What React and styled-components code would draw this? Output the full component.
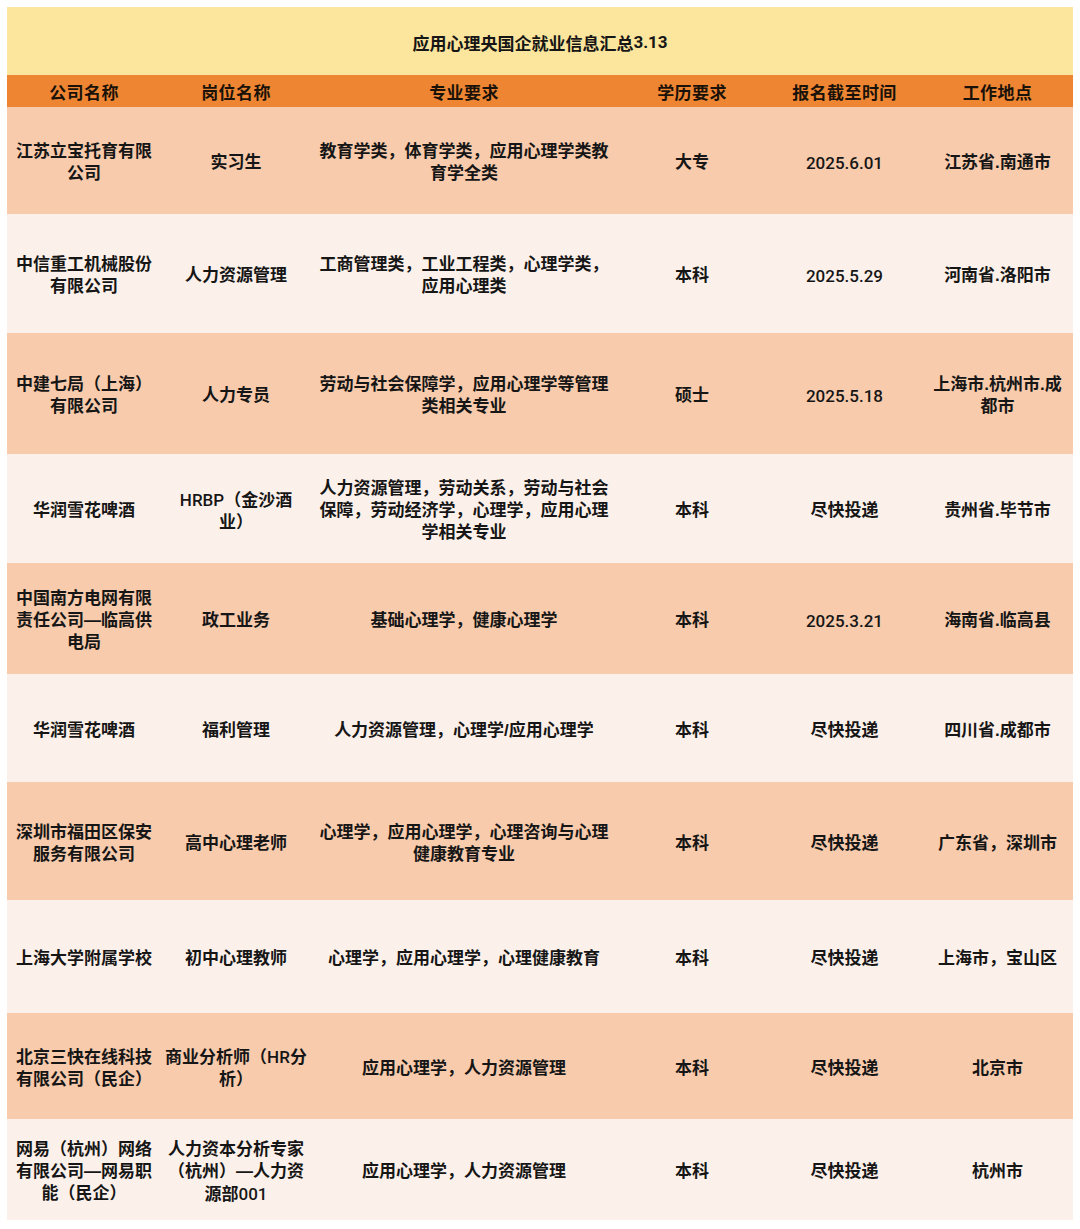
import React from 'react'
import styled, { createGlobalStyle } from 'styled-components'

const GlobalStyle = createGlobalStyle`
  body {
    margin: 0;
    background: #ffffff;
    font-family: "Liberation Sans", "Noto Sans CJK SC", sans-serif;
    color: #161616;
  }
`

const Page = styled.div`
  padding: 7px;
`

const Table = styled.div`
  width: 1066px;
  display: flex;
  flex-direction: column;
`

const TitleBar = styled.div`
  height: 68px;
  padding-top: 2px;
  box-sizing: border-box;
  background: #fce59c;
  display: flex;
  align-items: center;
  justify-content: center;
  font-size: 17px;
  font-weight: 700;
`

const Row = styled.div`
  display: grid;
  grid-template-columns: 154px 150px 306px 150px 155px 151px;
  height: ${(p) => p.$h}px;
  background: ${(p) => p.$bg};
`

const HeadRow = styled(Row)`
  background: #ee8533;
`

const HeadCell = styled.div`
  display: flex;
  align-items: center;
  justify-content: center;
  font-size: 17px;
  font-weight: 700;
  letter-spacing: 0.4px;
  color: #1a1208;
`

const Cell = styled.div`
  display: flex;
  align-items: center;
  justify-content: center;
  text-align: center;
  box-sizing: border-box;
  padding: 5px 4px 0;
  font-size: 17px;
  line-height: 22px;
  font-weight: 700;
  line-break: strict;
  white-space: pre-line;
`

const CellText = styled.div`
  width: 100%;
`

const Latin = styled.span`
  font-family: Roboto, "Liberation Sans", sans-serif;
  font-weight: ${(p) => (p.$bold ? 700 : 500)};
`

const headers = ['公司名称', '岗位名称', '专业要求', '学历要求', '报名截至时间', '工作地点']

const rows = [
  { h: 107, cells: ['江苏立宝托育有限公司', '实习生', '教育学类，体育学类，应用心理学类教育学全类', '大专', '2025.6.01', '江苏省.南通市'] },
  { h: 119, cells: ['中信重工机械股份有限公司', '人力资源管理', '工商管理类，工业工程类，心理学类，应用心理类', '本科', '2025.5.29', '河南省.洛阳市'] },
  { h: 121, cells: ['中建七局（上海）有限公司', '人力专员', '劳动与社会保障学，应用心理学等管理类相关专业', '硕士', '2025.5.18', '上海市.杭州市.成都市'] },
  { h: 109, cells: ['华润雪花啤酒', 'HRBP（金沙酒\n业）', '人力资源管理，劳动关系，劳动与社会保障，劳动经济学，心理学，应用心理学相关专业', '本科', '尽快投递', '贵州省.毕节市'] },
  { h: 111, cells: ['中国南方电网有限责任公司—临高供电局', '政工业务', '基础心理学，健康心理学', '本科', '2025.3.21', '海南省.临高县'] },
  { h: 108, cells: ['华润雪花啤酒', '福利管理', '人力资源管理，心理学/应用心理学', '本科', '尽快投递', '四川省.成都市'] },
  { h: 118, cells: ['深圳市福田区保安服务有限公司', '高中心理老师', '心理学，应用心理学，心理咨询与心理健康教育专业', '本科', '尽快投递', '广东省，深圳市'] },
  { h: 113, cells: ['上海大学附属学校', '初中心理教师', '心理学，应用心理学，心理健康教育', '本科', '尽快投递', '上海市，宝山区'] },
  { h: 106, cells: ['北京三快在线科技\n有限公司（民企）', '商业分析师（HR分\n析）', '应用心理学，人力资源管理', '本科', '尽快投递', '北京市'] },
  { h: 101, cells: ['网易（杭州）网络\n有限公司—网易职\n能（民企）', '人力资本分析专家\n（杭州）—人力资\n源部001', '应用心理学，人力资源管理', '本科', '尽快投递', '杭州市'] },
]

// latin runs (numbers, HRBP) use a medium-weight sans face
function Mixed({ text, bold }) {
  const parts = text.split(/([A-Za-z0-9]+(?:\.[0-9]+)*)/)
  return parts.map((part, i) =>
    /^[A-Za-z0-9]/.test(part)
      ? <Latin key={i} $bold={bold}>{part}</Latin>
      : <React.Fragment key={i}>{part}</React.Fragment>
  )
}

export default function App() {
  return (
    <Page>
      <GlobalStyle />
      <Table>
        <TitleBar>
          <Mixed text="应用心理央国企就业信息汇总3.13" bold />
        </TitleBar>
        <HeadRow $h={32}>
          {headers.map((h) => (
            <HeadCell key={h}>{h}</HeadCell>
          ))}
        </HeadRow>
        {rows.map((r, i) => (
          <Row key={i} $h={r.h} $bg={i % 2 === 0 ? '#f8cbac' : '#fcf1ea'}>
            {r.cells.map((c, j) => (
              <Cell key={j}>
                <CellText>
                  <Mixed text={c} />
                </CellText>
              </Cell>
            ))}
          </Row>
        ))}
      </Table>
    </Page>
  )
}
